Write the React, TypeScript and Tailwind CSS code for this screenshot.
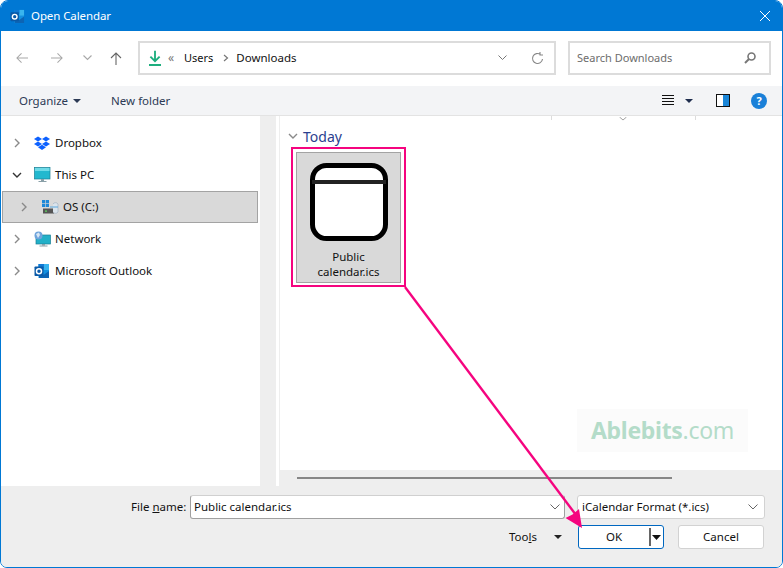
import React from "react";

const font = { fontFamily: '"Noto Sans", "Open Sans", sans-serif' };

function OutlookIcon({ size = 16 }: { size?: number }) {
  return (
    <svg width={size} height={size} viewBox="0 0 16 16">
      <rect x="4.5" y="1" width="10.5" height="14" fill="#1490df" />
      <rect x="10" y="1" width="5" height="6" fill="#38b4ee" />
      <rect x="4.5" y="1" width="5.5" height="4" fill="#0f78d4" />
      <path d="M15 8 L9.5 12 L5 9.5 V15 H15 Z" fill="#0c64b4" />
      <rect x="0.5" y="3.5" width="9" height="9.5" rx="0.8" fill="#0a5aa8" />
      <circle cx="5" cy="8.2" r="2.5" fill="none" stroke="#fff" strokeWidth="1.5" />
    </svg>
  );
}

function Chevron({ open = false, dark = false }: { open?: boolean; dark?: boolean }) {
  return (
    <svg width="10" height="10" viewBox="0 0 10 10" fill="none" stroke={dark ? "#333" : "#8a8a8a"} strokeWidth="1.4">
      {open ? <path d="M1 3 L5 7 L9 3" /> : <path d="M3 1 L7 5 L3 9" />}
    </svg>
  );
}

function Monitor() {
  return (
    <svg width="17" height="16" viewBox="0 0 17 16">
      <rect x="0.5" y="0.5" width="15.5" height="11.5" fill="#22b8cf" stroke="#1b7f95" strokeWidth="0.7" />
      <rect x="1" y="1" width="14.5" height="3" fill="#6fdbe8" />
      <rect x="7" y="12" width="3" height="2" fill="#8aa0a8" />
      <rect x="4.5" y="14" width="8" height="1" fill="#8aa0a8" />
    </svg>
  );
}

function Dropbox() {
  return (
    <svg width="16" height="15" viewBox="0 0 16 15" fill="#0d61ff">
      <path d="M4 0.5 L8 3 L4 5.5 L0 3 Z" />
      <path d="M12 0.5 L16 3 L12 5.5 L8 3 Z" />
      <path d="M4 5.5 L8 8 L4 10.5 L0 8 Z" />
      <path d="M12 5.5 L16 8 L12 10.5 L8 8 Z" />
      <path d="M4 11.2 L8 8.8 L12 11.2 L8 14 Z" />
    </svg>
  );
}

function Drive() {
  return (
    <svg width="17" height="15" viewBox="0 0 17 15">
      <rect x="0" y="0" width="3.2" height="3.2" fill="#1e88d8" />
      <rect x="3.8" y="0" width="3.2" height="3.2" fill="#1e88d8" />
      <rect x="0" y="3.8" width="3.2" height="3.2" fill="#1e88d8" />
      <rect x="3.8" y="3.8" width="3.2" height="3.2" fill="#1e88d8" />
      <rect x="1" y="8.5" width="11" height="5" fill="#555" />
      <rect x="3" y="10.5" width="2" height="1.2" fill="#5fdc5f" />
      <path d="M11 4 a3 3 0 0 1 5 0 V12 a3 3 0 0 1 -5 0" fill="#dbe4ec" stroke="#a9b8c6" strokeWidth="0.8" />
      <path d="M8 7 H16" stroke="#5ba8de" strokeWidth="1" />
    </svg>
  );
}

function NetworkIcon() {
  return (
    <svg width="17" height="16" viewBox="0 0 17 16">
      <rect x="2" y="4" width="14.5" height="9" fill="#22b0c8" stroke="#1b7f95" strokeWidth="0.7" />
      <rect x="8" y="13" width="3" height="1.6" fill="#8aa0a8" />
      <rect x="5.5" y="14.5" width="8" height="1" fill="#8aa0a8" />
      <circle cx="4.5" cy="4.5" r="4" fill="#6fa4dc" />
      <path d="M2 3 L5 1.5 L6 4 L4 7 Z" fill="#d9e7f4" />
    </svg>
  );
}

function TreeRow({
  icon,
  label,
  open,
}: {
  icon: React.ReactNode;
  label: string;
  open?: boolean;
}) {
  return (
    <div className="h-8 flex items-center pl-[11px]">
      <span className="w-[22px] flex items-center">
        <Chevron open={open} dark={open} />
      </span>
      <span className="w-[21px] flex items-center">{icon}</span>
      <span className="text-[11.5px] text-[#111]">{label}</span>
    </div>
  );
}

export default function App() {
  return (
    <div
      style={font}
      className="relative w-[783px] h-[568px] overflow-hidden bg-white rounded-t-[8px] rounded-b-[7px] border border-[#0078d4] flex flex-col"
    >
      {/* Title bar */}
      <div className="h-[30px] shrink-0 bg-[#0078d4] flex items-center pl-[10px] pr-[13px] -mx-px">
        <OutlookIcon size={15} />
        <span className="ml-[6px] text-[11.5px] tracking-[-0.1px] text-white">Open Calendar</span>
        <svg className="ml-auto" width="10" height="10" viewBox="0 0 10 10" stroke="#fff" strokeWidth="1" fill="none">
          <path d="M0 0 L10 10 M10 0 L0 10" />
        </svg>
      </div>

      {/* Nav bar */}
      <div className="h-[55px] shrink-0 bg-white flex items-start pt-[10px] pl-[15px]">
        <div className="h-[34px] flex items-center">
          <svg width="12" height="12" viewBox="0 0 13 12" fill="none" stroke="#a8a8a8" strokeWidth="1.1">
            <path d="M13 6 H1 M6 1 L1 6 L6 11" />
          </svg>
          <svg className="ml-[23px]" width="12" height="12" viewBox="0 0 13 12" fill="none" stroke="#a8a8a8" strokeWidth="1.1">
            <path d="M0 6 H12 M7 1 L12 6 L7 11" />
          </svg>
          <svg className="ml-[20px]" width="9" height="6" viewBox="0 0 9 6" fill="none" stroke="#a8a8a8" strokeWidth="1.1">
            <path d="M0.5 0.5 L4.5 4.5 L8.5 0.5" />
          </svg>
          <svg className="ml-[18px]" width="12" height="13" viewBox="0 0 12 13" fill="none" stroke="#666" strokeWidth="1.1">
            <path d="M6 13 V1 M1 6 L6 1 L11 6" />
          </svg>
        </div>

        <div className="ml-[16px] w-[418px] h-[34px] border-2 border-[#dcdcdc] flex items-center pl-[9px] pr-[10px]">
          <svg width="12" height="17" viewBox="0 0 13 17" fill="none" stroke="#1dae7e" strokeWidth="2">
            <path d="M6.5 0 V11 M1.5 6.5 L6.5 11.5 L11.5 6.5 M0 15.5 H13" />
          </svg>
          <span className="ml-[7px] w-[8px] text-[12px] text-[#777] leading-none">«</span>
          <span className="ml-[8px] text-[11px] text-[#111]">Users</span>
          <span className="ml-[10px] flex">
            <svg width="6" height="8" viewBox="0 0 6 8" fill="none" stroke="#777" strokeWidth="1.2">
              <path d="M1 1 L4.5 4 L1 7" />
            </svg>
          </span>
          <span className="ml-[7px] text-[11.5px] text-[#111]">Downloads</span>
          <svg className="ml-auto" width="9" height="6" viewBox="0 0 9 6" fill="none" stroke="#777" strokeWidth="1">
            <path d="M0.5 0.5 L4.5 4.5 L8.5 0.5" />
          </svg>
          <svg className="ml-[24px]" width="13" height="13" viewBox="0 0 13 13" fill="none" stroke="#888" strokeWidth="1.1">
            <path d="M11.5 7 A5 5 0 1 1 9.5 2.5 M9 0 V3 H12" />
          </svg>
        </div>

        <div className="ml-[12px] w-[203px] h-[34px] border-2 border-[#dcdcdc] flex items-center pl-[7px] pr-[13px]">
          <span className="text-[11px] text-[#6d6d6d]">Search Downloads</span>
          <svg className="ml-auto" width="12" height="12" viewBox="0 0 12 12" fill="none" stroke="#777" strokeWidth="1.6">
            <circle cx="7.5" cy="4.5" r="3.5" />
            <path d="M5 7 L1 11" strokeWidth="2" />
          </svg>
        </div>
      </div>

      {/* Command bar */}
      <div className="h-[30px] shrink-0 bg-[#f3f4f6] border-b border-[#e3e3e3] flex items-center pl-[18px] pr-[15px]">
        <span className="text-[11.5px] text-[#2c3a55]">Organize</span>
        <svg className="ml-[5px]" width="8" height="4" viewBox="0 0 8 4" fill="#2c3a55">
          <path d="M0 0 H8 L4 4 Z" />
        </svg>
        <span className="ml-[30px] text-[11.5px] text-[#2c3a55]">New folder</span>
        <svg className="ml-auto" width="12" height="11" viewBox="0 0 12 11" stroke="#111" strokeWidth="1" fill="none">
          <path d="M0 .5 H12 M0 3.5 H12 M0 6.5 H12 M0 9.5 H12" />
        </svg>
        <svg className="ml-[11px]" width="8" height="4" viewBox="0 0 8 4" fill="#1f2d4d">
          <path d="M0 0 H8 L4 4 Z" />
        </svg>
        <span className="ml-[23px] w-[14px] h-[13px] border border-[#111] flex">
          <span className="w-1/2 bg-white" />
          <span className="w-1/2 bg-[#1a86d8]" />
        </span>
        <span className="ml-[21px] w-4 h-4 rounded-full bg-[#1a80d8] text-white text-[11px] font-bold flex items-center justify-center leading-none">
          ?
        </span>
      </div>

      {/* Main */}
      <div className="flex-1 min-h-0 flex bg-white">
        {/* Left pane */}
        <div className="w-[259px] shrink-0 pt-[11px]">
          <TreeRow icon={<Dropbox />} label="Dropbox" />
          <TreeRow icon={<Monitor />} label="This PC" open />
          <div className="h-8 ml-[1px] w-[256px] bg-[#d9d9d9] border border-[#a3a3a3] flex items-center pl-[16px]">
            <span className="w-[23px] flex items-center">
              <Chevron />
            </span>
            <span className="w-[21px] flex items-center">
              <Drive />
            </span>
            <span className="text-[11.5px] text-[#111]">OS (C:)</span>
          </div>
          <TreeRow icon={<NetworkIcon />} label="Network" />
          <TreeRow icon={<OutlookIcon />} label="Microsoft Outlook" />
        </div>
        {/* Left scrollbar track */}
        <div className="w-[16px] shrink-0 bg-[#eeeeee]" />
        <div className="w-[3px] shrink-0 bg-white" />
        <div className="w-px shrink-0 bg-[#eeeeee]" />

        {/* Right pane */}
        <div className="flex-1 min-w-0 flex flex-col">
          <div className="flex-1 min-h-0 relative pl-[8px]">
            <div className="absolute top-0 left-[271px] w-px h-[4px] bg-[#dcdcdc]" />
            <div className="absolute top-0 left-[415px] w-px h-[4px] bg-[#dcdcdc]" />
            <svg className="absolute top-[1px] left-[339px]" width="8" height="4" viewBox="0 0 8 4" fill="none" stroke="#888" strokeWidth="0.8">
              <path d="M0.5 0 L4 3 L7.5 0" />
            </svg>
            <div className="flex items-center h-[20px] mt-[10px]">
              <Chevron open />
              <span className="ml-[5px] text-[14px] text-[#2b3f8f]">Today</span>
            </div>
            <div className="ml-[8px] mt-[6px] w-[105px] h-[131px] bg-[#d9d9d9] border border-[#a3a3a3] flex flex-col items-center">
              <svg className="mt-[10px]" width="78" height="78" viewBox="0 0 78 78" fill="none">
                <rect x="2.5" y="2.5" width="73" height="73" rx="14" stroke="#000" strokeWidth="5" fill="#fff" />
                <path d="M2 19 H76" stroke="#222" strokeWidth="4" />
              </svg>
              <div className="mt-[8px] text-[11.5px] leading-[15px] text-center text-[#111]">
                Public
                <br />
                calendar.ics
              </div>
            </div>
            {/* Watermark */}
            <div className="absolute left-[297px] top-[293px] w-[171px] h-[43px] bg-[#fbfbfb] flex items-center justify-center text-[23px] tracking-[-0.3px] text-[#b4dcc9]">
              <span className="font-bold">Ablebits</span>
              <span>.com</span>
            </div>
          </div>
          {/* Horizontal scrollbar */}
          <div className="h-[16px] shrink-0 bg-[#eeeeee] flex items-center pl-[17px]">
            <div className="w-[375px] h-[2px] bg-[#868686]" />
          </div>
        </div>
      </div>

      {/* Footer */}
      <div className="h-[81px] shrink-0 bg-[#eeeeee] flex flex-col">
        <div className="flex items-center mt-[9px] h-[24px]">
          <span className="ml-[130px] w-[59px] text-[11.5px] text-[#111]">
            File <span className="underline">n</span>ame:
          </span>
          <div className="w-[375px] h-[24px] bg-white border border-[#a0a0a0] border-t-[#d0d0d0] rounded-[3px] flex items-center pl-[3px] pr-[4px]">
            <span className="text-[11.5px] text-[#111]">Public calendar.ics</span>
            <svg className="ml-auto" width="10" height="6" viewBox="0 0 10 6" fill="none" stroke="#666" strokeWidth="1">
              <path d="M0.5 0.5 L5 5 L9.5 0.5" />
            </svg>
          </div>
          <div className="ml-[12px] w-[188px] h-[24px] bg-white border border-[#d2d2d2] rounded-[3px] flex items-center pl-[4px] pr-[6px]">
            <span className="text-[11.5px] text-[#111]">iCalendar Format (*.ics)</span>
            <svg className="ml-auto" width="10" height="6" viewBox="0 0 10 6" fill="none" stroke="#666" strokeWidth="1">
              <path d="M0.5 0.5 L5 5 L9.5 0.5" />
            </svg>
          </div>
        </div>
        <div className="flex items-center mt-[6px] h-[24px]">
          <span className="ml-[508px] w-[30px] text-[11.5px] text-[#111]">
            Too<span className="underline">l</span>s
          </span>
          <svg className="ml-[15px]" width="8" height="4" viewBox="0 0 8 4" fill="#222">
            <path d="M0 0 H8 L4 4 Z" />
          </svg>
          <div className="ml-[16px] w-[86px] h-[24px] bg-white border border-[#0067c0] rounded-[3px] flex items-center relative">
            <span className="flex-1 text-center text-[11.5px] text-[#111] pr-[14px]">OK</span>
            <span className="absolute right-[12px] top-[2px] w-[2px] h-[18px] bg-[#666]" />
            <svg className="absolute right-[2px] top-[9px]" width="9" height="5" viewBox="0 0 9 5" fill="#111">
              <path d="M0 0 H9 L4.5 5 Z" />
            </svg>
          </div>
          <div className="ml-[14px] w-[86px] h-[24px] bg-white border border-[#d2d2d2] rounded-[3px] flex items-center justify-center">
            <span className="text-[11.5px] text-[#111]">Cancel</span>
          </div>
        </div>
      </div>

      {/* Annotation overlay */}
      <div className="absolute left-[290px] top-[146px] w-[115px] h-[140px] border-2 border-[#f5047f]" />
      <svg className="absolute left-[-1px] top-[-1px] pointer-events-none" width="783" height="568" viewBox="0 0 783 568">
        <path d="M405 287 L576 515" stroke="#f5047f" strokeWidth="2.4" fill="none" />
        <path d="M582 528 L565.5 518 L572.5 514.5 L579 509 Z" fill="#f5047f" />
      </svg>
    </div>
  );
}
